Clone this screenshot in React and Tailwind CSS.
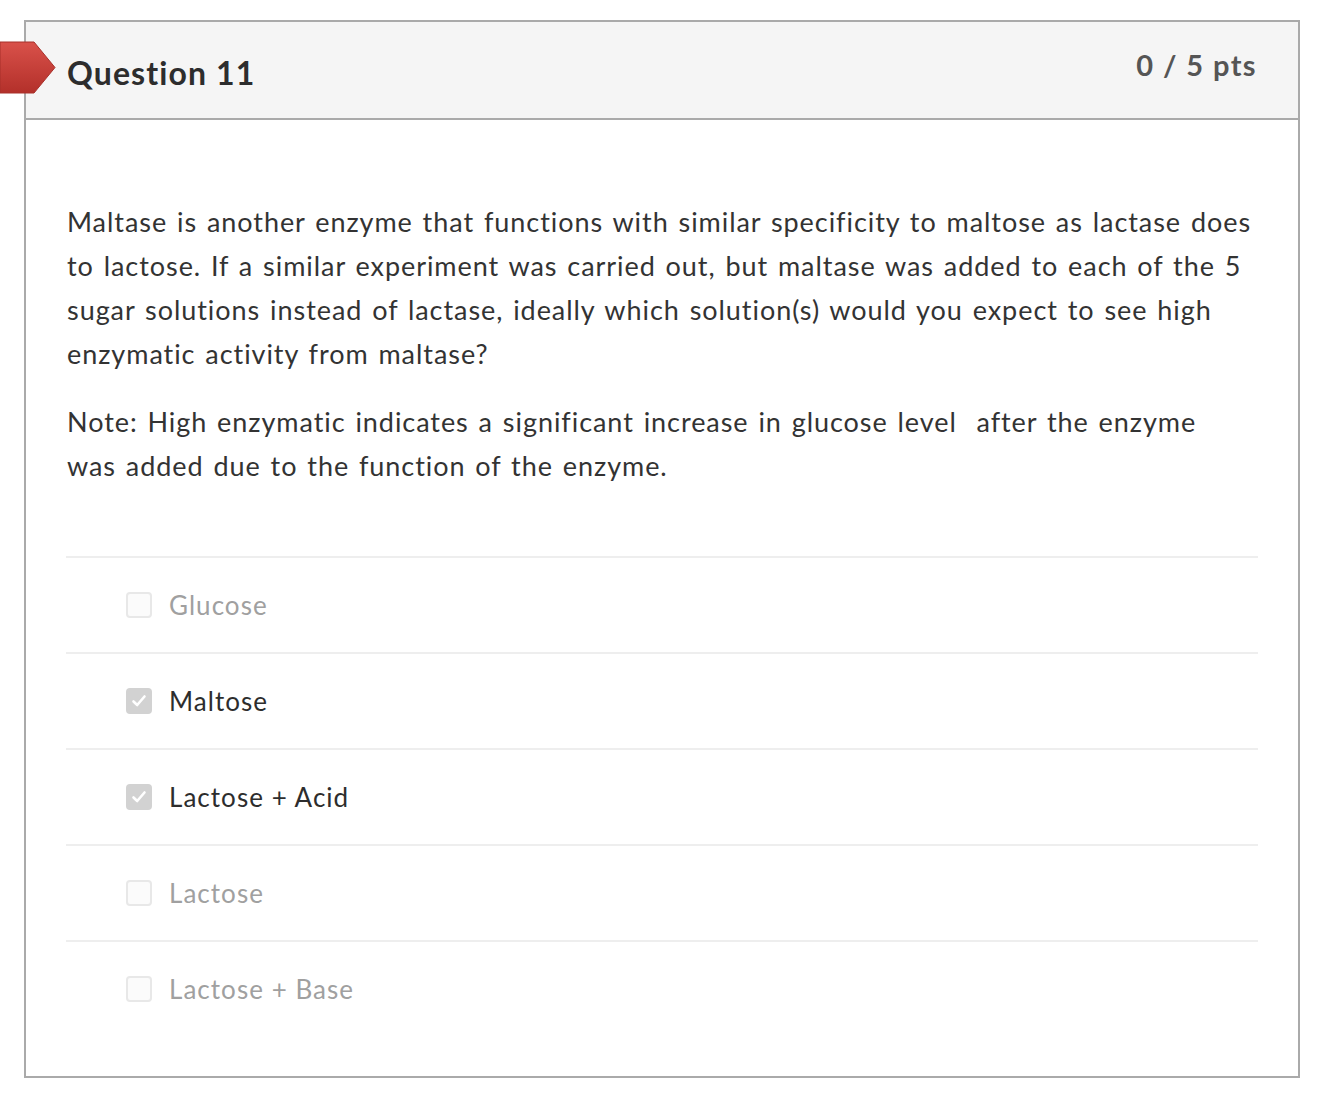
import { useState } from "react";

const answers = [
  { label: "Glucose", checked: false },
  { label: "Maltose", checked: true },
  { label: "Lactose + Acid", checked: true },
  { label: "Lactose", checked: false },
  { label: "Lactose + Base", checked: false },
];

function Box({ checked }) {
  if (checked) {
    return (
      <span className="flex h-[26px] w-[26px] shrink-0 items-center justify-center rounded-[4px] bg-[#d2d2d2]">
        <svg width="18" height="18" viewBox="0 0 18 18">
          <path d="M3.5 9.5 L7.2 13 L14.5 4.5" fill="none" stroke="#ffffff" strokeWidth="2.6" strokeLinecap="round" strokeLinejoin="round" />
        </svg>
      </span>
    );
  }
  return <span className="block h-[26px] w-[26px] shrink-0 rounded-[4px] border-2 border-[#e8e8e8] bg-[#fbfbfb]" />;
}

function Marker() {
  return (
    <svg className="absolute left-0 top-[40px]" width="58" height="56" viewBox="0 0 58 56">
      <defs>
        <linearGradient id="red" x1="0" y1="0" x2="0" y2="1">
          <stop offset="0" stopColor="#d9514a" />
          <stop offset="1" stopColor="#b3302a" />
        </linearGradient>
      </defs>
      <polygon points="0,2 34,2 55,27.5 34,53 0,53" fill="url(#red)" stroke="#a8302a" strokeWidth="1" />
    </svg>
  );
}

export default function App() {
  const [picked] = useState(answers);

  return (
    <div className="relative min-h-[1100px] bg-white pl-[24px] pr-[38px] pt-[20px]" style={{ fontFamily: "Lato, 'Open Sans', sans-serif" }}>
      <div className="border-2 border-[#aaaaaa] bg-white">
        {/* header */}
        <div className="flex h-[98px] items-start justify-between border-b-2 border-[#aaaaaa] bg-[#f5f5f5] px-[41px]">
          <h2 className="pt-[31px] text-[32px] font-bold leading-[40px] tracking-[1.1px] text-[#2d2d2d]">Question 11</h2>
          <div className="pt-[25px] text-[29px] font-bold leading-[36px] tracking-[1.4px] text-[#555555]">0 / 5 pts</div>
        </div>

        {/* body */}
        <div className="px-[40px] pb-[40px] pt-[80px] text-[27px] leading-[44px] tracking-[0.035em] [word-spacing:2px] text-[#333333]">
          <p className="pl-[1px]">
            Maltase is another enzyme that functions with similar specificity to maltose as lactase does to lactose. If a similar experiment was carried out, but maltase was added to each of the 5 sugar solutions instead of lactase, ideally which solution(s) would you expect to see high enzymatic activity from maltase?
          </p>
          <p className="mt-[24px] pl-[1px]">
            Note: High enzymatic indicates a significant increase in glucose level&nbsp; after the enzyme
            <br />
            was added due to the function of the enzyme.
          </p>

          <div className="mt-[68px] [word-spacing:0px]">
            {picked.map((a, i) => (
              <div key={i} className="flex h-[96px] items-center gap-[17px] border-t-2 border-[#eeeeee] pl-[60px]">
                <Box checked={a.checked} />
                <span className={"text-[26px] tracking-[0.04em] " + (a.checked ? "text-[#2d2d2d]" : "text-[#a0a0a0]")}>{a.label}</span>
              </div>
            ))}
          </div>
        </div>
      </div>
      <Marker />
    </div>
  );
}
